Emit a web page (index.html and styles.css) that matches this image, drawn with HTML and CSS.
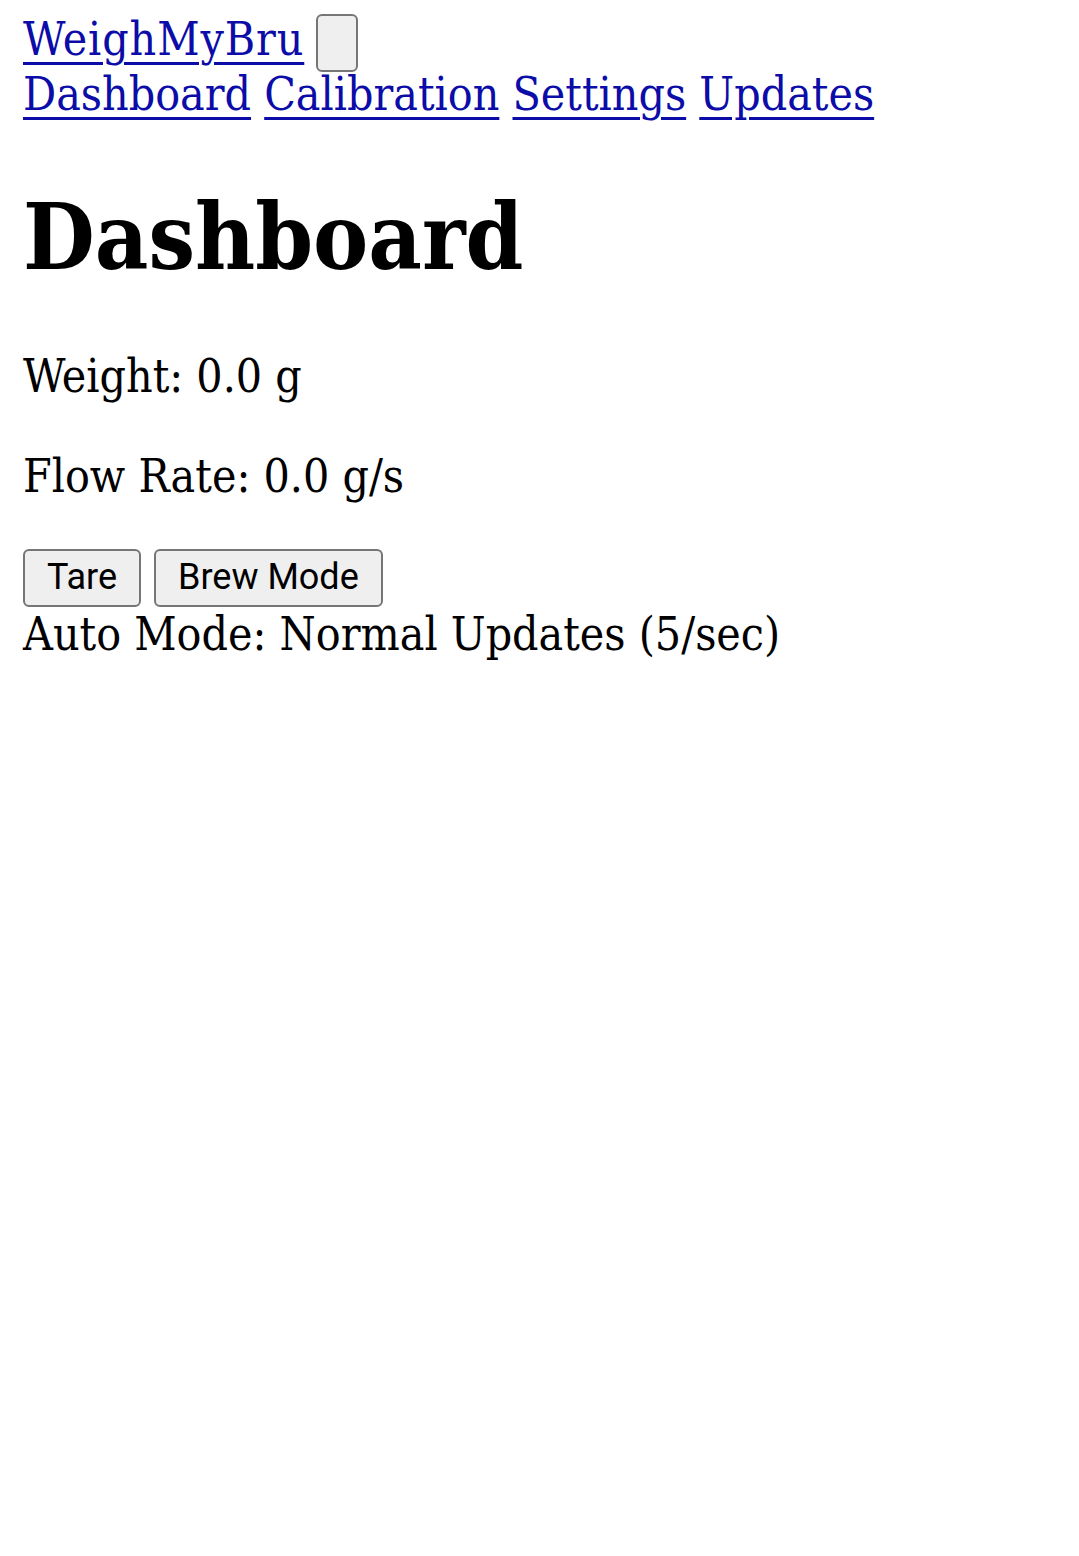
FILE: index.html
```html
<!DOCTYPE html>
<html lang="en">
<head>
<meta charset="utf-8">
<title>WeighMyBru</title>
<link rel="stylesheet" href="styles.css">
</head>
<body>
<div class="page">
  <nav class="topnav">
    <div class="brand-row">
      <a class="brand" href="#">WeighMyBru</a>
      <button class="menu-toggle" type="button" aria-label="Menu"></button>
    </div>
    <div class="nav-links"><a href="#">Dashboard</a> <a href="#">Calibration</a> <a href="#">Settings</a> <a href="#">Updates</a></div>
  </nav>
  <main class="content">
    <h1 class="title">Dashboard</h1>
    <p class="reading">Weight: <span>0.0</span> g</p>
    <p class="reading">Flow Rate: <span>0.0</span> g/s</p>
    <div class="actions">
      <button class="btn" type="button">Tare</button>
      <button class="btn" type="button">Brew Mode</button>
    </div>
    <div class="status">Auto Mode: Normal Updates (5/sec)</div>
  </main>
</div>
</body>
</html>
```
FILE: styles.css
```css
html, body {
  margin: 0;
  padding: 0;
  background: #ffffff;
}

.page {
  padding: 12px 23px 0;
  font-family: "DejaVu Serif Condensed", "DejaVu Serif", serif;
  font-size: 46px;
  line-height: 55px;
  color: #000000;
}

.topnav a {
  color: #0c0ca8;
  text-decoration: underline;
  text-decoration-thickness: 3px;
  text-underline-offset: 7px;
}

.topnav .brand {
  letter-spacing: 0.9px;
}

.brand-row {
  display: flex;
  align-items: flex-start;
  gap: 12px;
  height: 55px;
}

.menu-toggle {
  box-sizing: border-box;
  width: 42px;
  height: 58px;
  margin-top: 2px;
  padding: 0;
  border: 2px solid #767676;
  border-radius: 6px;
  background: #efefef;
}

.nav-links {
  white-space: nowrap;
}

.content {
  display: block;
}

.title {
  margin: 60px 0 57px;
  font-size: 92px;
  line-height: 110px;
  font-weight: bold;
}

.reading {
  margin: 0 0 45px;
}

.actions {
  display: flex;
  gap: 13px;
  margin-top: 0;
}

.btn {
  box-sizing: border-box;
  height: 58px;
  padding: 6px 22px 8px;
  border: 2px solid #767676;
  border-radius: 6px;
  background: #efefef;
  color: #000000;
  font-family: Roboto, "Liberation Sans", sans-serif;
  font-size: 36px;
  line-height: 40px;
}

.status {
  margin-top: 0;
}
```
